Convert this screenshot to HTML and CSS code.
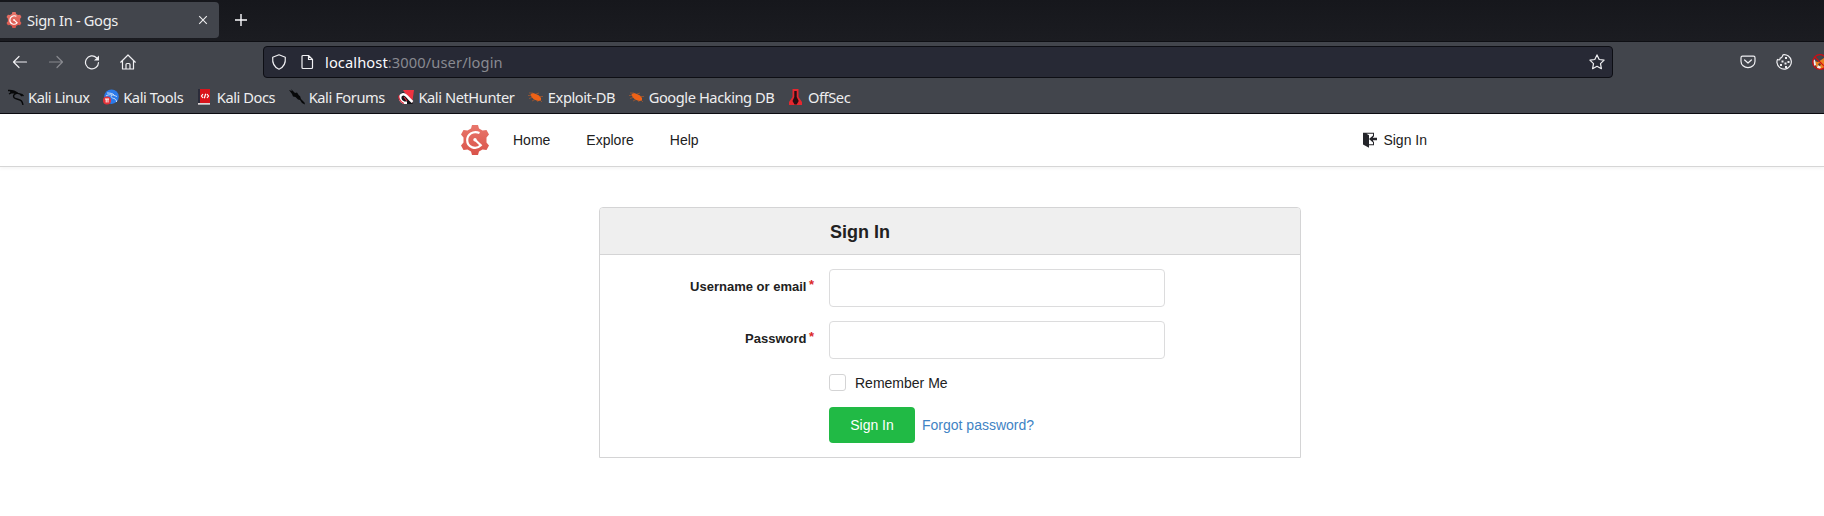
FILE: index.html
```html
<!DOCTYPE html>
<html lang="en">
<head>
<meta charset="utf-8">
<title>Sign In - Gogs</title>
<link rel="stylesheet" href="styles.css">
</head>
<body>
<svg class="defs" width="0" height="0" aria-hidden="true">
  <defs>
    <linearGradient id="gear-fill" x1="0" y1="0" x2="0" y2="1"><stop offset="0" stop-color="#e8766b"/><stop offset="1" stop-color="#d9534a"/></linearGradient>
    <symbol id="gogs" viewBox="0 0 28 30">
      <path fill="url(#gear-fill)" d="M11 0h6l1 3.600 3.500 2L25.500 5l2.500 4.500-2.500 3v5l2.500 3-2.500 4.500-4-.6-3.500 2L17 30h-6l-1-3.600-3.500-2-4 .6L0 20.500l2.500-3v-5L0 9.500 2.500 5l4 .6 3.500-2z"/>
      <path fill="none" stroke="#fff" stroke-width="2.200" d="M18.500 8C12 5.200 6.200 9.500 6.200 15.300c0 7.200 8.800 10 13.600 5L14.500 15.300"/>
      <circle cx="14" cy="14.800" r="1.700" fill="#fff"/>
    </symbol>
    <symbol id="bug" viewBox="0 0 16 16">
      <path fill="#ef6216" d="M2.500 5 5 4l3 1 3 1.500 2 2.500v2.500l-3 .5-4-1.500L3.500 8z"/>
      <path fill="none" stroke="#ae5a2d" stroke-width=".7" d="M1 4h4M1 9.500l3-1M4 12l3-1.500M8 5l3-1M12 7.500h3M12 11l2 2M9 11l1 2M0 6.500h3"/>
    </symbol>
  </defs>
</svg>

<header class="browser">
  <div class="tabs">
    <div class="tab">
      <svg class="tab-icon" width="16" height="16"><use href="#gogs"/></svg>
      <span class="tab-title">Sign In - Gogs</span>
      <svg class="tab-close" width="10" height="10" viewBox="0 0 10 10"><path d="m1.200 1.200 7.600 7.600m0-7.600-7.600 7.600"/></svg>
    </div>
    <svg class="new-tab" width="12" height="12" viewBox="0 0 12 12"><path d="M6 0v12M0 6h12"/></svg>
  </div>

  <div class="toolbar">
    <div class="controls">
      <svg class="line" width="16" height="16" viewBox="0 0 16 16"><path d="M14.500 8H1.500M7 2.500 1.500 8 7 13.500"/></svg>
      <svg class="line disabled" width="16" height="16" viewBox="0 0 16 16"><path d="M1.500 8h13M9 2.500 14.500 8 9 13.500"/></svg>
      <svg class="line" width="16" height="16" viewBox="0 0 16 16"><path d="M12.500 3.700A6.500 6.500 0 1 0 14.500 8.500"/><path class="solid" d="M15 1.500V6.500H10z"/></svg>
      <svg class="line" width="16" height="16" viewBox="0 0 16 16"><path d="M.7 8.200 8 1l7.300 7.200M2.500 7v8h11V7M6 15v-4.500a1 1 0 0 1 1-1h2a1 1 0 0 1 1 1V15"/></svg>
    </div>
    <div class="address">
      <svg class="line" width="16" height="16" viewBox="0 0 16 16"><path d="m8 .8 6.300 2.500c.5 5.600-1.300 9.900-6.300 11.900C3 13.200 1.200 8.900 1.700 3.300z"/></svg>
      <svg class="line page-icon" width="16" height="16" viewBox="0 0 16 16"><path d="M4 1.500h5.500l4 4v8a1 1 0 0 1-1 1H4a1 1 0 0 1-1-1v-11a1 1 0 0 1 1-1zM9.500 1.500v4h4"/></svg>
      <span class="url"><b>localhost</b>:3000/user/login</span>
      <svg class="line star" width="16" height="16" viewBox="0 0 16 16"><path d="m8 .9 2.200 4.600 4.900.6-3.600 3.500.9 5.100L8 12.300l-4.400 2.400.9-5.100L.9 6.100l4.900-.6z"/></svg>
    </div>
    <div class="extensions">
      <svg class="line" width="16" height="16" viewBox="0 0 16 16"><path d="M2.500 2.200h11a1.500 1.500 0 0 1 1.500 1.500V7.200a7 6.500 0 0 1-14 0V3.700a1.500 1.500 0 0 1 1.500-1.500zM4.600 6 8 9l3.400-3"/></svg>
      <svg class="line" width="16" height="16" viewBox="0 0 16 16"><path d="M7 .8a7.200 7.200 0 1 1-6 8C.8 7.500 1 6.500 1.500 5.500c1.500.8 3 .2 2.600-1.500C5.800 4 6.500 2.500 7 .8z"/><path class="solid" d="M9 3h2v2H9zM5.500 6.500h2v2h-2zM11.500 7h2v2h-2zM8.500 8.500h2v2h-2zM4 10h2v2H4zM9 12h2v2H9z"/></svg>
      <svg width="16" height="16" viewBox="0 0 16 16"><path fill="#ed8220" d="m2 7 4 1 6-4 4 1v10H6L4 12z"/><path fill="#eee" d="m1 5 2 1 1 5-2 1zM6 11l3 2-1 2-3-1z"/><path fill="#523d36" d="m7 9 2 1-1 2-2-1z"/><circle cx="8" cy="8" r="7.300" fill="none" stroke="#d00c12" stroke-width="1.300"/><path stroke="#d00c12" stroke-width="1.200" d="m3 3 10 10"/></svg>
    </div>
  </div>

  <nav class="bookmarks">
    <a class="bookmark"><svg width="16" height="16" viewBox="0 0 16 16"><path fill="none" stroke="#070809" stroke-width="1.400" d="M0 1.500c4-.3 7 .4 9.500 2.700M1 5c3-2.200 6-1.800 9-.6l4 1.200 1.500 1.500M10 4c-4 .6-5.500 3-3.500 5 2 1.500 5.500 1 7 3 .8 1 1.200 2.500 1.500 4M2 3l5 1M12 5l2 2"/></svg>Kali Linux</a>
    <a class="bookmark"><svg width="16" height="16" viewBox="0 0 16 16"><circle cx="8.500" cy="7.700" r="7.300" fill="#2b7ae9"/><path fill="none" stroke="#c9def8" stroke-width="1" d="M4 4c3 0 6 .4 7 2M3 7c3-2 6-1.500 11 .5M9 6c-2 2 0 3 2 3.500s2.500 2 2.500 3.500"/><circle cx="4" cy="11.500" r="4" fill="#e53137"/><path fill="none" stroke="#fff" d="M2 10h4M3.200 10v3.500M5 10v3.500"/></svg>Kali Tools</a>
    <a class="bookmark"><svg width="16" height="16" viewBox="0 0 16 16"><path fill="#d9141b" d="M3 0h10v14H3z"/><path fill="#2b2c3a" d="M1 0h2v14H1z"/><path fill="#ded7d8" d="M1 14h12v1.700H1z"/><path fill="none" stroke="#fff" stroke-width="1.200" d="M6 5 4.500 7 6 9M10 5l1.500 2L10 9M8.700 4.800 7.300 9.200"/></svg>Kali Docs</a>
    <a class="bookmark"><svg width="16" height="16" viewBox="0 0 16 16"><path fill="#070809" d="M0 1l3 1-1-2 4 4 2-.5 2 3 1 .5 1 3 3.500 3.500.5 2-3-1.500-2-3-2-.5L6.500 8 4 7.500 3 5z"/></svg>Kali Forums</a>
    <a class="bookmark"><svg width="16" height="16" viewBox="0 0 16 16"><path fill="#ee3340" d="M5 1h11l-2 14z"/><path fill="#151519" d="M0 7l5-4 5 5 5 7H4z"/><path fill="none" stroke="#fff" stroke-width="2.500" d="M9 13.700H6C1 12 1 6 5 5.200c3-.5 5 4 9.500 7.800"/><path fill="none" stroke="#db2638" stroke-width="1.200" d="M.7 6.500c0 4 2 6.500 5.300 8M6 8l3 4"/></svg>Kali NetHunter</a>
    <a class="bookmark"><svg width="16" height="16"><use href="#bug"/></svg>Exploit-DB</a>
    <a class="bookmark"><svg width="16" height="16"><use href="#bug"/></svg>Google Hacking DB</a>
    <a class="bookmark"><svg width="16" height="16" viewBox="0 0 16 16"><path fill="#e6272f" d="M4.500 0h6v8L14 13v3H1v-3l3.500-5z"/><path fill="#260f14" d="M6.300 2h2.400v6l2 4-2 3.500H6.500L4.500 12l1.800-4z"/></svg>OffSec</a>
  </nav>
</header>

<nav class="site-nav">
  <svg class="logo" width="28" height="30"><use href="#gogs"/></svg>
  <a>Home</a>
  <a>Explore</a>
  <a>Help</a>
  <a class="nav-signin"><svg width="14" height="16" viewBox="0 0 14 16"><path fill="#24252a" d="M0 .7h11v4H10v-3H3.500L6 3.200v12.500L0 12.500z"/><path fill="#24252a" d="M6 12.300h4V9.500h1v3.800H6zM6 7l4-3.500v2.300h4v2.400h-4v2.300z"/></svg>Sign In</a>
</nav>

<main>
  <form class="card">
    <h3 class="card-title">Sign In</h3>
    <div class="card-body">
      <label class="field-label" for="username">Username or email</label>
      <input class="field-input" id="username" type="text">
      <label class="field-label" for="password">Password</label>
      <input class="field-input" id="password" type="password">
      <label class="remember"><input class="check" type="checkbox">Remember Me</label>
      <div class="actions">
        <button class="submit" type="button">Sign In</button>
        <a class="forgot">Forgot password?</a>
      </div>
    </div>
  </form>
</main>
</body>
</html>
```
FILE: styles.css
```css
* { box-sizing: border-box; }
body { margin: 0; background: #fff; color: #212121; font: 14px/20px "Liberation Sans", Arial, sans-serif; overflow: hidden; }
svg { display: block; flex: none; }
.defs { position: absolute; }

.browser { height: 114px; background: #42454c; color: #eeeeef; border-bottom: 1px solid #0b0b10; font-family: "Noto Sans", sans-serif; overflow: hidden; }
.tabs { display: flex; align-items: center; height: 42px; padding: 0 0 1px; background: linear-gradient(#16171c, #1b1c21); border-bottom: 1px solid #0e0f14; }
.tab { display: flex; align-items: center; width: 219px; height: 36px; margin-top: -1px; padding: 0 11px 0 6px; background: #42454c; border-radius: 0 4px 4px 0; }
.tab-title { flex: 1; margin-left: 5px; font-size: 14.67px; letter-spacing: -.33px; color: #eeeeef; }
.tab-close path { fill: none; stroke: #eeeeef; stroke-width: 1.1; }
.new-tab { margin-left: 16px; }
.new-tab path { stroke: #fbfbfe; stroke-width: 1.4; }

.toolbar { display: flex; align-items: center; height: 40px; }
.line { fill: none; stroke: #f0f0f3; stroke-width: 1.2; stroke-linejoin: round; stroke-linecap: round; }
.solid { fill: #f0f0f3; stroke: none; }
.controls { display: flex; flex: none; gap: 20px; width: 263px; padding-left: 12px; }
.controls .disabled { opacity: .4; }
.address { display: flex; flex: none; align-items: center; width: 1350px; height: 32px; padding: 0 7px; background: #272935; border: 1px solid #0d0e14; border-radius: 4px; }
.page-icon { margin-left: 12px; }
.url { flex: 1; margin-left: 10px; font-size: 14.67px; letter-spacing: .1px; color: #898a91; }
.url b { font-weight: 400; color: #fbfbfe; }
.extensions { display: flex; flex: none; gap: 20px; margin-left: 127px; }

.bookmarks { display: flex; align-items: center; gap: 13.5px; height: 31px; padding: 0 0 2px 8px; font-size: 14.67px; letter-spacing: -.43px; white-space: nowrap; }
.bookmark { display: flex; align-items: center; gap: 4px; }

.site-nav { display: flex; align-items: center; height: 53px; padding: 0 397px 0 461px; border-bottom: 1px solid #d6d6d6; box-shadow: 0 2px 3px rgba(0, 0, 0, .04); }
.logo { margin: 0 -12px 0 0; }
.site-nav a { margin-left: 36px; }
.site-nav .nav-signin { display: flex; align-items: center; gap: 6px; margin-left: auto; }

.card { width: 702px; margin: 40px 0 0 599px; border: 1px solid #d4d4d5; border-radius: 4px 4px 0 0; }
.card-title { height: 47px; margin: 0; padding-left: 230px; background: #efefef; border-bottom: 1px solid #d4d4d5; border-radius: 3px 3px 0 0; font-size: 18px; line-height: 48px; }
.card-body { display: grid; grid-template-columns: 214px 336px; grid-template-rows: 38px 38px 20px 36px; column-gap: 15px; row-gap: 14px; height: 202px; padding-top: 14px; }
.field-label { font-size: 13px; font-weight: 700; line-height: 36px; text-align: right; }
.field-label::after { content: "*"; margin-left: 2.5px; color: #db2828; vertical-align: 2px; line-height: 1; }
.field-input { width: 336px; height: 38px; padding: 0 13px; background: #fff; border: 1px solid #dcdcdd; border-radius: 4px; }
.remember { grid-column: 2; display: flex; align-items: center; gap: 9px; height: 19px; }
.check { appearance: none; width: 17px; height: 17px; margin: 0; border: 1px solid #d4d4d5; border-radius: 3px; }
.actions { grid-column: 2; display: flex; align-items: center; gap: 7px; }
.submit { width: 86px; height: 36px; padding: 0; background: #21ba45; color: #fff; border: 0; border-radius: 4px; font: inherit; }
.forgot { color: #4183c4; }
```
